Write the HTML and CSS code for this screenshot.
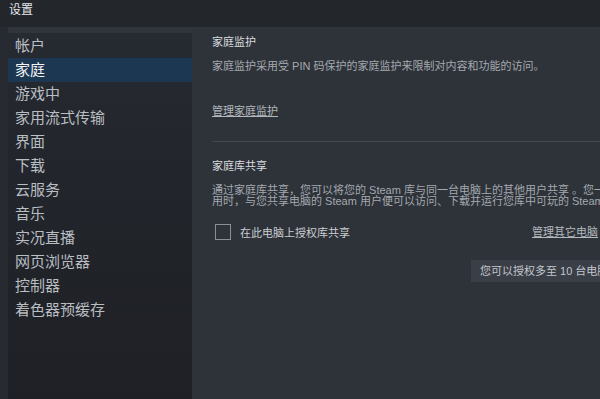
FILE: index.html
```html
<!DOCTYPE html>
<html lang="zh-CN">
<head>
    <meta charset="UTF-8">
    <meta name="viewport" content="width=device-width, initial-scale=1.0">
    <title>设置</title>
    <link rel="stylesheet" href="styles.css">
</head>
<body>
    <div class="titlebar">设置</div>
    <div class="main">
        <div class="sidebar">
            <div class="nav-item">帐户</div>
            <div class="nav-item active">家庭</div>
            <div class="nav-item">游戏中</div>
            <div class="nav-item">家用流式传输</div>
            <div class="nav-item">界面</div>
            <div class="nav-item">下载</div>
            <div class="nav-item">云服务</div>
            <div class="nav-item">音乐</div>
            <div class="nav-item">实况直播</div>
            <div class="nav-item">网页浏览器</div>
            <div class="nav-item">控制器</div>
            <div class="nav-item">着色器预缓存</div>
        </div>

        <div class="content">
            <div class="section-title first">家庭监护</div>
            <div class="desc">家庭监护采用受 PIN 码保护的家庭监护来限制对内容和功能的访问。</div>
            <a href="#" class="link manage-family">管理家庭监护</a>
            <div class="divider"></div>

            <div class="section-title">家庭库共享</div>
            <div class="desc para">通过家庭库共享，您可以将您的 Steam 库与同一台电脑上的其他用户共享 。您一旦在这台电脑上授权，在您不使<br>用时，与您共享电脑的 Steam 用户便可以访问、下载并运行您库中可玩的 Steam 游戏。</div>

            <div class="check-row">
                <span class="checkbox"></span>
                <span class="check-label">在此电脑上授权库共享</span>
                <a href="#" class="link manage-pcs">管理其它电脑</a>
            </div>

            <div class="limit-box">您可以授权多至 10 台电脑。</div>
        </div>
    </div>
</body>
</html>
```

FILE: styles.css
```css
body {
    margin: 0;
    width: 600px;
    height: 399px;
    overflow: hidden;
    background: #272a30;
    font-family: "Liberation Sans", "Noto Sans CJK SC", sans-serif;
    color: #c6cacf;
}

.titlebar {
    height: 27px;
    box-sizing: border-box;
    padding: 3px 0 0 9px;
    font-size: 12px;
    line-height: 15px;
    color: #e4e7ea;
    background: #23262b;
}

.main {
    display: flex;
    height: 372px;
}

.sidebar {
    width: 184px;
    margin-left: 8px;
    padding-top: 1px;
    box-sizing: border-box;
    border-top: 6px solid #30343b;
    background: linear-gradient(180deg, #262a31 0%, #22252b 40%, #1e2025 100%);
}

.nav-item {
    height: 24px;
    line-height: 24px;
    padding-left: 7px;
    font-size: 15px;
    color: #b9bec3;
}

.nav-item.active {
    background: #1c3752;
    color: #f2f4f6;
}

.content {
    flex: 1;
    padding-left: 20px;
    background: #2e3239;
    overflow: hidden;
    white-space: nowrap;
}

.section-title {
    margin-top: 17px;
    font-size: 11px;
    line-height: 14px;
    color: #d9dcdf;
}

.section-title.first { margin-top: 8px; }

.desc {
    margin-top: 10px;
    font-size: 11px;
    line-height: 14px;
    color: #a3a9af;
}

.desc.para {
    margin-top: 12px;
    line-height: 11px;
}

.link {
    color: #b3b9bf;
    font-size: 11px;
    line-height: 14px;
    text-decoration: underline;
}

.manage-family {
    display: inline-block;
    margin-top: 31px;
}

.divider {
    height: 1px;
    margin-top: 22px;
    background: #434850;
}

.check-row {
    display: flex;
    align-items: center;
    width: 386px;
    height: 16px;
    margin-top: 17px;
}

.checkbox {
    width: 14px;
    height: 14px;
    margin-left: 3px;
    border: 1px solid #8a8f95;
}

.check-label {
    margin-left: 9px;
    font-size: 11px;
    color: #c9cdd1;
}

.manage-pcs { margin-left: auto; }

.limit-box {
    display: inline-block;
    margin: 20px 0 0 259px;
    height: 22px;
    line-height: 22px;
    padding: 0 9px;
    font-size: 11px;
    color: #c2c7cc;
    background: #3a3e46;
}
```
